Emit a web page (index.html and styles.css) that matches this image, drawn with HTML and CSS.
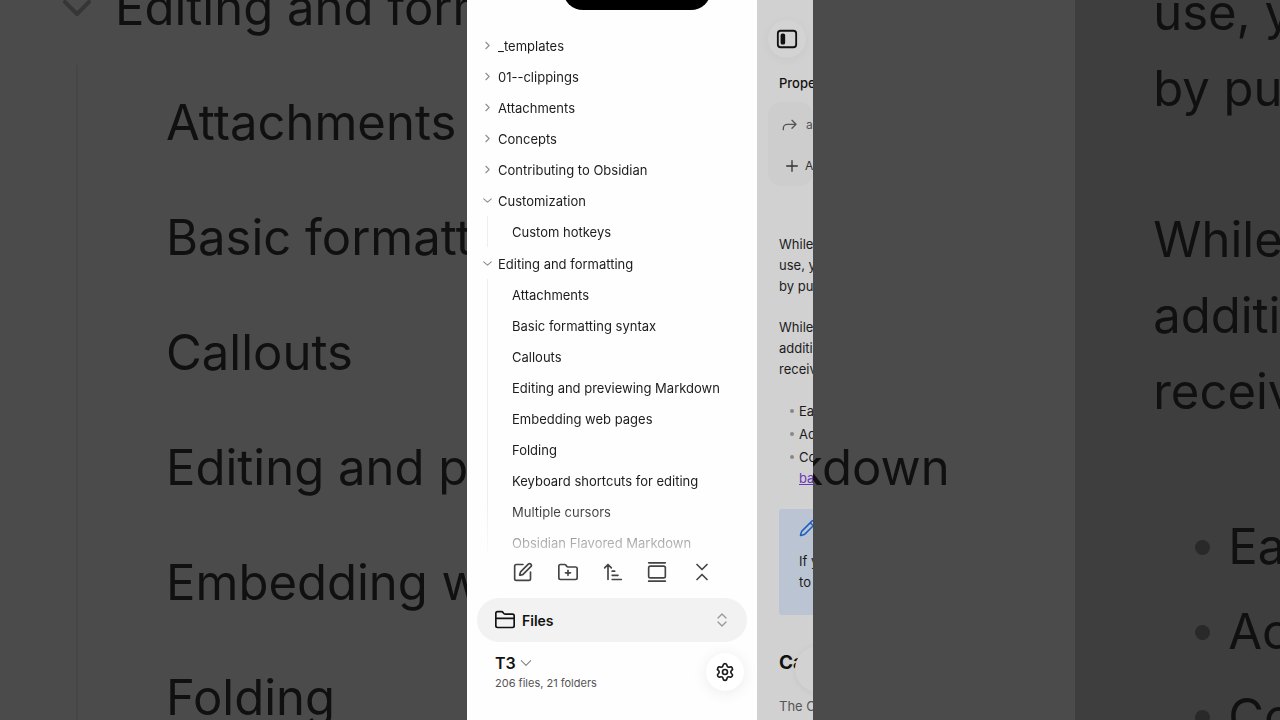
FILE: index.html
```html
<!DOCTYPE html>
<html lang="en">
<head>
<meta charset="UTF-8" />
<title>Files</title>
<link rel="stylesheet" href="styles.css">
</head>
<body>

<div class="stage">

  <div class="backdrop" aria-hidden="true">
    <div class="backdrop-tree">
      <div class="backdrop-folder">
        <svg class="icon" viewBox="0 0 24 24"><path d="m6 9 6 6 6-6"/></svg>
        <span>Editing and formatting</span>
      </div>
      <div class="backdrop-children">
        <div>Attachments</div>
        <div>Basic formatting</div>
        <div>Callouts</div>
        <div>Editing and previewing Markdown</div>
        <div>Embedding web</div>
        <div>Folding</div>
      </div>
    </div>
    <div class="backdrop-note">
      <p>use, y<br>by pu</p>
      <p>While<br>additi<br>receiv</p>
      <ul>
        <li>Ea</li>
        <li>Ac</li>
        <li>Co</li>
      </ul>
    </div>
  </div>

  <main class="phone">
    <div class="island"></div>

    <section class="sidebar">
      <nav class="tree">
        <button class="row"><svg class="icon" viewBox="0 0 24 24"><path d="m9 18 6-6-6-6"/></svg>_templates</button>
        <button class="row"><svg class="icon" viewBox="0 0 24 24"><path d="m9 18 6-6-6-6"/></svg>01--clippings</button>
        <button class="row"><svg class="icon" viewBox="0 0 24 24"><path d="m9 18 6-6-6-6"/></svg>Attachments</button>
        <button class="row"><svg class="icon" viewBox="0 0 24 24"><path d="m9 18 6-6-6-6"/></svg>Concepts</button>
        <button class="row"><svg class="icon" viewBox="0 0 24 24"><path d="m9 18 6-6-6-6"/></svg>Contributing to Obsidian</button>
        <button class="row"><svg class="icon" viewBox="0 0 24 24"><path d="m5 9 7 6 7-6"/></svg>Customization</button>
        <div class="children">
          <a class="row" href="#">Custom hotkeys</a>
        </div>
        <button class="row"><svg class="icon" viewBox="0 0 24 24"><path d="m5 9 7 6 7-6"/></svg>Editing and formatting</button>
        <div class="children">
          <a class="row" href="#">Attachments</a>
          <a class="row" href="#">Basic formatting syntax</a>
          <a class="row" href="#">Callouts</a>
          <a class="row" href="#">Editing and previewing Markdown</a>
          <a class="row" href="#">Embedding web pages</a>
          <a class="row" href="#">Folding</a>
          <a class="row" href="#">Keyboard shortcuts for editing</a>
          <a class="row" href="#">Multiple cursors</a>
          <a class="row" href="#">Obsidian Flavored Markdown</a>
        </div>
      </nav>

      <div class="toolbar">
        <button aria-label="New note"><svg class="icon" viewBox="0 0 24 24"><path d="M12 3H4a2 2 0 0 0-2 2v15a2 2 0 0 0 2 2h15a2 2 0 0 0 2-2v-8"/><path d="M18.375 2.625a1 1 0 0 1 3 3l-9.013 9.014a2 2 0 0 1-.853.505l-2.873.84a.5.5 0 0 1-.62-.62l.84-2.873a2 2 0 0 1 .506-.852z"/></svg></button>
        <button aria-label="New folder"><svg class="icon" viewBox="0 0 24 24"><path d="M12 10v6M9 13h6"/><path d="M21 21a2 2 0 0 0 2-2V8a2 2 0 0 0-2-2h-8.900a2 2 0 0 1-1.690-.9L9.600 3.900A2 2 0 0 0 7.930 3H3a2 2 0 0 0-2 2v14a2 2 0 0 0 2 2Z"/></svg></button>
        <button aria-label="Sort order"><svg class="icon" viewBox="0 0 24 24"><path d="m2 7 4-4 4 4M6 3v18M11 11h3M11 16h7M11 21h11"/></svg></button>
        <button aria-label="Auto-reveal"><svg class="icon" viewBox="0 0 24 24"><path d="M2 1h20M2 23h20"/><rect x="2" y="5" width="20" height="14" rx="2"/></svg></button>
        <button aria-label="Collapse all"><svg class="icon" viewBox="0 0 24 24"><path d="m6 21 6-6 6 6M6 3l6 6 6-6"/></svg></button>
      </div>

      <button class="switcher">
        <svg class="icon" viewBox="0 0 24 24"><path d="M21 21a2 2 0 0 0 2-2V7a2 2 0 0 0-2-2h-8.900a2 2 0 0 1-1.690-.9L9.600 2.900A2 2 0 0 0 7.930 2H3a2 2 0 0 0-2 2v15a2 2 0 0 0 2 2ZM1 10h22"/></svg>
        <span>Files</span>
        <svg class="icon arrows" viewBox="0 0 24 24"><path d="m6 15 6 6 6-6M6 9l6-6 6 6"/></svg>
      </button>

      <footer class="footer">
        <div class="vault">
          <button class="vault-name">T3 <svg class="icon" viewBox="0 0 24 24"><path d="m4 8 8 8 8-8"/></svg></button>
          <div class="vault-info">206 files, 21 folders</div>
        </div>
        <button class="round" aria-label="Settings"><svg class="icon" viewBox="0 0 24 24"><path d="M9.671 4.136a2.34 2.34 0 0 1 4.659 0 2.34 2.34 0 0 0 3.319 1.915 2.34 2.34 0 0 1 2.33 4.033 2.34 2.34 0 0 0 0 3.831 2.34 2.34 0 0 1-2.33 4.033 2.34 2.34 0 0 0-3.319 1.915 2.34 2.34 0 0 1-4.659 0 2.34 2.34 0 0 0-3.32-1.915 2.34 2.34 0 0 1-2.33-4.033 2.34 2.34 0 0 0 0-3.831A2.34 2.34 0 0 1 6.35 6.051a2.34 2.34 0 0 0 3.319-1.915"/><circle cx="12" cy="12" r="3"/></svg></button>
      </footer>
    </section>

    <section class="note">
      <button class="round" aria-label="Toggle sidebar"><svg class="icon" viewBox="0 0 24 24"><rect x="2" y="3" width="20" height="18" rx="3"/><rect class="solid" x="6" y="7" width="3" height="10" rx="1"/></svg></button>
      <h2 class="props-title">Proper</h2>
      <div class="props">
        <div><svg class="icon" viewBox="0 0 24 24"><path d="m15 17 6-6-6-6M2 19v-2a6 6 0 0 1 6-6h13"/></svg>a</div>
        <div class="add"><svg class="icon" viewBox="0 0 24 24"><path d="M4 12h16M12 4v16"/></svg>A</div>
      </div>
      <p>While<br>use, y<br>by pu</p>
      <p>While<br>additi<br>receiv</p>
      <ul>
        <li>Ea</li>
        <li>Ac</li>
        <li>Co<br><a href="#">ba</a></li>
      </ul>
      <div class="callout">
        <svg class="icon" viewBox="0 0 24 24"><path d="M21.174 6.812a1 1 0 0 0-3.986-3.987L3.842 16.174a2 2 0 0 0-.5.830l-1.321 4.352a.5.5 0 0 0 .623.622l4.353-1.320a2 2 0 0 0 .830-.497zM15 5l4 4"/></svg>
        <div>If y<br>to</div>
      </div>
      <h1>Ca</h1>
      <p class="faded">The C</p>
      <button class="floating" aria-label="Menu"></button>
    </section>
  </main>

</div>

</body>
</html>
```
FILE: styles.css
```css
* {
  box-sizing: border-box;
}
body {
  margin: 0;
  font-family: Inter, "Liberation Sans", sans-serif;
  font-size: 13px;
  color: #1c1c1c;
}
button {
  padding: 0;
  border: none;
  background: none;
  font: inherit;
  color: inherit;
  cursor: pointer;
}
a {
  color: inherit;
  text-decoration: none;
}
ul {
  list-style: none;
  margin: 0;
  padding: 0;
}
.icon {
  flex: none;
  width: 20px;
  height: 20px;
  fill: none;
  stroke: currentColor;
  stroke-width: 2;
  stroke-linecap: round;
  stroke-linejoin: round;
}
.stage {
  display: grid;
  height: 100vh;
  overflow: hidden;
}

/* enlarged, darkened copy behind the phone */
.backdrop {
  grid-area: 1 / 1;
  display: grid;
  grid-template-columns: 84% 16%;
  min-height: 0;
  overflow: hidden;
  background: #4b4b4b;
  color: #101010;
  font-size: 49px;
  white-space: nowrap;
}
.backdrop-tree {
  margin-top: -50px;
  line-height: 115px;
}
.backdrop-folder {
  display: flex;
  align-items: center;
  gap: 14px;
  padding-left: 53px;
}
.backdrop-folder .icon {
  width: 48px;
  height: 48px;
  color: #363636;
}
.backdrop-children {
  margin-left: 76px;
  padding-left: 88px;
  border-left: 2px solid #464646;
}
.backdrop-note {
  overflow: hidden;
  padding-left: 78px;
  background: #3e3e3e;
  line-height: 76px;
}
.backdrop-note p {
  margin: 0 0 75px;
}
.backdrop-note p:first-child {
  margin-top: -25px;
}
.backdrop-note ul {
  padding-top: 4px;
}
.backdrop-note li {
  display: flex;
  align-items: center;
  gap: 18px;
  margin-bottom: 9px;
  padding-left: 42px;
}
.backdrop-note li::before {
  content: "";
  flex: none;
  width: 15px;
  height: 15px;
  border-radius: 50%;
  background: #292929;
}

.phone {
  grid-area: 1 / 1;
  justify-self: center;
  position: relative;
  display: flex;
  width: 346px;
  min-height: 0;
  overflow: hidden;
}
.island {
  position: absolute;
  top: -30px;
  left: 96px;
  width: 148px;
  height: 40px;
  border-radius: 20px;
  background: #000;
}

/* sidebar */
.sidebar {
  display: flex;
  flex-direction: column;
  flex: 0 0 290px;
  min-height: 0;
  background: #fefefe;
}
.tree {
  flex: 1;
  min-height: 0;
  overflow: hidden;
  padding: 30px 0 0 14px;
  mask-image: linear-gradient(#000 calc(100% - 50px), transparent calc(100% + 14px));
}
.row {
  display: flex;
  align-items: center;
  gap: 4px;
  height: 31px;
  white-space: nowrap;
}
.row .icon {
  width: 13px;
  height: 13px;
  color: #8c8c8c;
}
.children {
  margin: 0 0 1px 6px;
  padding-left: 24px;
  border-left: 1px solid #eee;
}
.toolbar {
  display: flex;
  justify-content: space-between;
  padding: 10px 45px 16px 46px;
  color: #444;
}
.toolbar button {
  display: flex;
}
.switcher {
  display: flex;
  align-items: center;
  gap: 7px;
  height: 44px;
  margin: 0 10px;
  padding: 0 17px 0 18px;
  border-radius: 22px;
  background: #f2f2f2;
  color: #111;
  font-size: 14px;
  font-weight: 600;
}
.switcher .arrows {
  width: 16px;
  height: 16px;
  margin-left: auto;
  color: #999;
}
.footer {
  display: flex;
  align-items: center;
  justify-content: space-between;
  padding: 10px 13px 28px 28px;
}
.vault-name {
  display: flex;
  align-items: center;
  gap: 3px;
  font-size: 16px;
  font-weight: 600;
  line-height: 22px;
  color: #111;
}
.vault-name .icon {
  width: 14px;
  height: 14px;
  color: #888;
}
.vault-info {
  font-size: 11px;
  line-height: 18px;
  color: #555;
}
.round {
  display: flex;
  align-items: center;
  justify-content: center;
  width: 38px;
  height: 38px;
  border-radius: 50%;
  background: #fff;
  box-shadow: 0 2px 16px rgba(0, 0, 0, 0.08);
}

/* dimmed note */
.note {
  position: relative;
  flex: 1;
  min-width: 0;
  overflow: hidden;
  padding: 20px 0 0 22px;
  background: #d1d1d1;
  line-height: 21px;
  white-space: nowrap;
}
.note .round {
  margin-left: -11px;
  background: #d3d3d3;
  box-shadow: 0 2px 12px rgba(0, 0, 0, 0.04);
  color: #111;
}
.solid {
  fill: currentColor;
}
.note .round .icon {
  width: 22px;
  height: 22px;
}
.props-title {
  margin: 15px 0 8px;
  font-size: 13px;
  font-weight: 500;
  color: #111;
}
.props {
  margin: 0 0 48px -11px;
  padding: 2px 0 0 14px;
  border-radius: 14px;
  background: #cdcdcd;
  font-size: 12px;
  color: #555;
}
.props div {
  display: flex;
  align-items: center;
  gap: 8px;
  height: 41px;
}
.props .icon {
  width: 16px;
  height: 16px;
}
.props .add {
  gap: 5px;
  padding-left: 2px;
  color: #333;
}
.note p {
  margin: 0 0 20px;
}
.note ul {
  margin-top: 21px;
}
.note li {
  position: relative;
  margin-bottom: 2px;
  padding-left: 20px;
}
.note li::before {
  content: "";
  position: absolute;
  top: 8px;
  left: 11px;
  width: 4px;
  height: 4px;
  border-radius: 50%;
  background: #888;
}
.note li a {
  color: #6a38b8;
  text-decoration: underline;
}
.callout {
  margin-top: 20px;
  padding: 10px 0 22px 20px;
  border-radius: 3px 0 0 3px;
  background: #bac4d3;
}
.callout .icon {
  display: block;
  width: 18px;
  height: 18px;
  margin-bottom: 14px;
  color: #1f5fc0;
}
.note h1 {
  margin: 35px 0 20px;
  font-size: 19px;
  font-weight: 700;
  line-height: 26px;
  color: #111;
}
.note .faded {
  color: #555;
}
.floating {
  position: absolute;
  bottom: 28px;
  left: 38px;
  width: 46px;
  height: 46px;
  border-radius: 50%;
  background: #d2d2d2;
  box-shadow: 0 1px 6px rgba(0, 0, 0, 0.06);
}
```
